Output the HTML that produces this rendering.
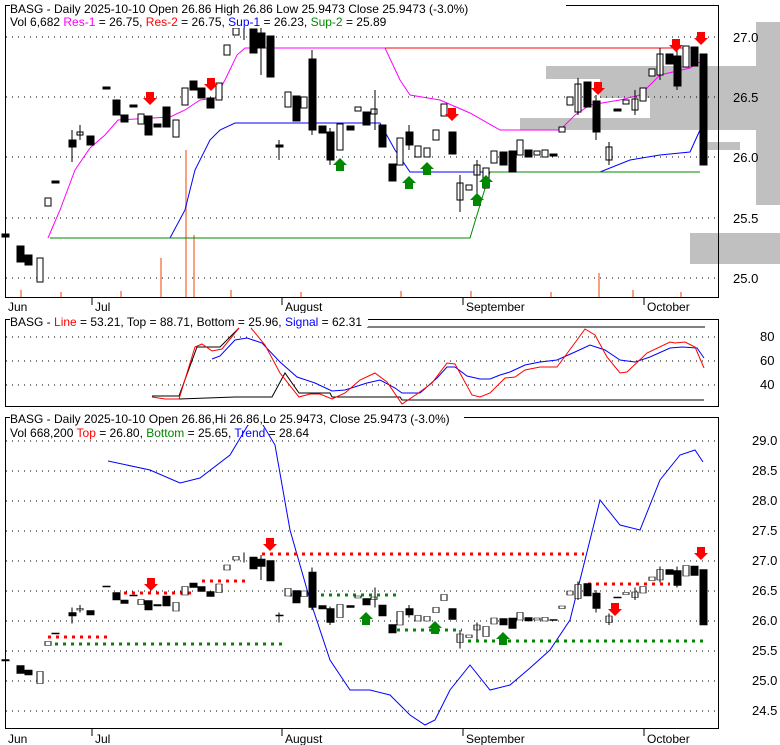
<!DOCTYPE html>
<html><head><meta charset="utf-8"><style>
html,body{margin:0;padding:0;background:#fff;}
svg{display:block;font-family:"Liberation Sans",sans-serif;font-size:12px;}
</style></head><body>
<svg width="780" height="745" viewBox="0 0 780 745" xmlns="http://www.w3.org/2000/svg">
<defs>
<g id="cd" stroke="#000" vector-effect="non-scaling-stroke">
<rect x="2" y="234" width="7" height="3" fill="#000"/>
<rect x="17" y="246" width="7" height="16" fill="#000"/>
<rect x="25" y="255" width="7" height="10" fill="#000"/>
<rect x="37" y="258" width="6" height="24" fill="#fff"/>
<rect x="45" y="198" width="6" height="8" fill="#fff"/>
<rect x="52" y="181" width="7" height="2" fill="#000"/>
<rect x="69" y="140" width="7" height="7" fill="#000"/>
<rect x="77" y="132" width="6" height="3" fill="#fff"/>
<rect x="87" y="136" width="7" height="9" fill="#000"/>
<rect x="103" y="87" width="7" height="2" fill="#000"/>
<rect x="113" y="100" width="7" height="15" fill="#000"/>
<rect x="121" y="115" width="7" height="7" fill="#000"/>
<rect x="130" y="105" width="7" height="2" fill="#000"/>
<rect x="138" y="114" width="6" height="10" fill="#fff"/>
<rect x="145" y="116" width="7" height="19" fill="#000"/>
<rect x="154" y="124" width="7" height="3" fill="#000"/>
<rect x="163" y="107" width="7" height="20" fill="#000"/>
<rect x="173" y="120" width="6" height="17" fill="#fff"/>
<rect x="182" y="88" width="6" height="17" fill="#fff"/>
<rect x="190" y="81" width="7" height="9" fill="#000"/>
<rect x="198" y="88" width="7" height="10" fill="#000"/>
<rect x="207" y="98" width="7" height="10" fill="#000"/>
<rect x="216" y="83" width="6" height="17" fill="#fff"/>
<rect x="224" y="45" width="6" height="10" fill="#fff"/>
<rect x="233" y="28" width="6" height="7" fill="#fff"/>
<rect x="250" y="29" width="7" height="24" fill="#000"/>
<rect x="258" y="33" width="7" height="15" fill="#000"/>
<rect x="267" y="36" width="7" height="41" fill="#000"/>
<rect x="276" y="145" width="7" height="2" fill="#000"/>
<rect x="285" y="92" width="6" height="15" fill="#fff"/>
<rect x="293" y="96" width="7" height="25" fill="#000"/>
<rect x="301" y="97" width="6" height="11" fill="#fff"/>
<rect x="309" y="59" width="7" height="71" fill="#000"/>
<rect x="319" y="126" width="7" height="7" fill="#000"/>
<rect x="327" y="132" width="7" height="28" fill="#000"/>
<rect x="337" y="124" width="6" height="26" fill="#fff"/>
<rect x="347" y="126" width="7" height="4" fill="#000"/>
<rect x="355" y="107" width="6" height="4" fill="#fff"/>
<rect x="363" y="112" width="7" height="13" fill="#000"/>
<rect x="371" y="109" width="6" height="5" fill="#fff"/>
<rect x="379" y="125" width="7" height="22" fill="#000"/>
<rect x="389" y="164" width="7" height="17" fill="#000"/>
<rect x="397" y="138" width="6" height="27" fill="#fff"/>
<rect x="406" y="132" width="7" height="13" fill="#000"/>
<rect x="415" y="146" width="6" height="11" fill="#fff"/>
<rect x="424" y="148" width="6" height="9" fill="#fff"/>
<rect x="433" y="130" width="6" height="10" fill="#fff"/>
<rect x="441" y="104" width="6" height="12" fill="#fff"/>
<rect x="449" y="132" width="7" height="22" fill="#000"/>
<rect x="457" y="183" width="6" height="17" fill="#fff"/>
<rect x="466" y="185" width="6" height="5" fill="#fff"/>
<rect x="474" y="165" width="6" height="10" fill="#fff"/>
<rect x="483" y="168" width="6" height="20" fill="#fff"/>
<rect x="491" y="151" width="6" height="12" fill="#fff"/>
<rect x="500" y="152" width="7" height="13" fill="#000"/>
<rect x="509" y="151" width="7" height="21" fill="#000"/>
<rect x="517" y="140" width="6" height="15" fill="#fff"/>
<rect x="525" y="150" width="7" height="7" fill="#000"/>
<rect x="534" y="151" width="6" height="4" fill="#fff"/>
<rect x="542" y="150" width="6" height="7" fill="#fff"/>
<rect x="550" y="154" width="7" height="2" fill="#000"/>
<rect x="559" y="127" width="6" height="5" fill="#fff"/>
<rect x="567" y="97" width="6" height="8" fill="#fff"/>
<rect x="575" y="84" width="6" height="28" fill="#fff"/>
<rect x="584" y="82" width="7" height="25" fill="#000"/>
<rect x="593" y="101" width="7" height="31" fill="#000"/>
<rect x="606" y="147" width="6" height="13" fill="#fff"/>
<rect x="614" y="109" width="7" height="2" fill="#000"/>
<rect x="623" y="100" width="6" height="4" fill="#fff"/>
<rect x="632" y="99" width="6" height="11" fill="#fff"/>
<rect x="640" y="88" width="6" height="13" fill="#fff"/>
<rect x="649" y="69" width="6" height="7" fill="#fff"/>
<rect x="657" y="54" width="6" height="21" fill="#fff"/>
<rect x="666" y="54" width="7" height="10" fill="#000"/>
<rect x="674" y="56" width="7" height="30" fill="#000"/>
<rect x="683" y="46" width="6" height="21" fill="#fff"/>
<rect x="691" y="47" width="7" height="19" fill="#000"/>
<rect x="700" y="54" width="7" height="111" fill="#000"/>
<path d="M72 130V162M80 125V140M244 20V40M261 25V75M279 140V160M312 50V135M330 128V165M375 90V130M409 125V150M460 175V212M477 160V195M578 78V115M596 95V140M609 142V165M635 90V115M660 48V80M677 48V90" fill="none"/>
</g>
<polygon id="ad" points="-4,0 4,0 4,6 7,6 0,13 -7,6 -4,6" fill="#f00"/>
<polygon id="au" points="-4,13 4,13 4,7 7,7 0,0 -7,7 -4,7" fill="#080"/>
</defs>

<!-- PANEL 1 -->
<g fill="#c0c0c0">
<rect x="546" y="66" width="234" height="13"/>
<rect x="600" y="79" width="180" height="19"/>
<rect x="650" y="98" width="130" height="20"/>
<rect x="520" y="118" width="260" height="12"/>
<rect x="756" y="22" width="24" height="44"/>
<rect x="756" y="130" width="24" height="75"/>
<rect x="707" y="142" width="33" height="8"/>
<rect x="690" y="233" width="90" height="31"/>
</g>
<g stroke="#000" stroke-dasharray="1,5">
<path d="M6 37H720M6 97H720M6 157H720M6 218H720M6 278H720"/>
</g>
<g fill="#f8a080">
<rect x="185" y="150" width="2" height="147"/><rect x="160" y="258" width="2" height="39"/><rect x="193" y="235" width="2" height="62"/><rect x="598" y="273" width="2" height="24"/>
<rect x="20" y="290" width="2" height="7"/><rect x="60" y="292" width="2" height="5"/><rect x="120" y="291" width="2" height="6"/><rect x="230" y="290" width="2" height="7"/><rect x="300" y="292" width="2" height="5"/><rect x="400" y="291" width="2" height="6"/><rect x="470" y="291" width="2" height="6"/><rect x="550" y="292" width="2" height="5"/><rect x="632" y="290" width="2" height="7"/><rect x="680" y="292" width="2" height="5"/>
</g>
<path d="M48 238L60 210L75 170L90 148L105 135L118 120L170 117L185 110L200 100L215 98L225 80L237 55L245 48L385 48L400 80L410 95L440 100L470 113L500 130L560 130L575 115L590 105L620 100L640 95L660 75L690 68L700 62" fill="none" stroke="#f0f"/>
<path d="M385 48H690" stroke="#f00"/>
<path d="M170 238L185 210L195 170L210 140L220 130L235 123L380 123L395 150L410 172L600 172L630 160L660 155L690 152L700 130" fill="none" stroke="#00f"/>
<path d="M50 238H470L490 172H700" fill="none" stroke="#080"/>
<use href="#cd"/>
<use href="#ad" x="150" y="92"/><use href="#ad" x="211" y="78"/><use href="#ad" x="452" y="108"/><use href="#ad" x="598" y="82"/><use href="#ad" x="676" y="39"/><use href="#ad" x="701" y="32"/>
<use href="#au" x="340" y="158"/><use href="#au" x="409" y="176"/><use href="#au" x="427" y="162"/><use href="#au" x="477" y="193"/><use href="#au" x="486" y="175"/>
<rect x="5.5" y="5.5" width="713" height="292" fill="none" stroke="#000"/>
<rect x="6" y="0" width="560" height="28" fill="#fff"/>
<path d="M5.5 12V5.5H10" stroke="#000" fill="none"/>
<text x="10" y="13">BASG - Daily 2025-10-10 Open 26.86  High 26.86  Low 25.9473  Close 25.9473 (-3.0%)</text>
<text x="10" y="26">Vol 6,682 <tspan fill="#f0f">Res-1</tspan> = 26.75, <tspan fill="#f00">Res-2</tspan> = 26.75, <tspan fill="#00f">Sup-1</tspan> = 26.23, <tspan fill="#080">Sup-2</tspan> = 25.89</text>
<g font-size="13"><text x="733" y="42">27.0</text><text x="733" y="102">26.5</text><text x="733" y="162">26.0</text><text x="733" y="223">25.5</text><text x="733" y="283">25.0</text></g>
<path d="M92 298V305M282 298V305M463 298V305M644 298V305" stroke="#000"/>
<text x="8" y="311">Jun</text><text x="95" y="311">Jul</text><text x="285" y="311">August</text><text x="466" y="311">September</text><text x="647" y="311">October</text>

<!-- PANEL 2 -->
<rect x="5.5" y="319.5" width="713" height="87" fill="none" stroke="#000"/>
<g stroke="#000" stroke-dasharray="1,5"><path d="M6 337H720M6 361H720M6 385H720"/></g>
<path d="M367 327H705" stroke="#000"/>
<path d="M152 396H179L197 347H220L239 328" fill="none" stroke="#000"/>
<path d="M179 399L235 397L272 397L285 373L299 393L330 393L332 397L400 397L402 400L704 400" fill="none" stroke="#000"/>
<path d="M212 359L220 356L235 340L247 338L262 343L280 362L297 377L315 383L332 391L345 390L367 383L380 380L395 388L402 393L420 393L437 378L447 367L455 367L467 376L480 379L490 379L500 375L510 372L525 365L540 362L557 360L575 352L590 345L605 350L620 360L635 362L650 357L670 348L682 347L697 348L704 358" fill="none" stroke="#00f"/>
<path d="M152 397L165 399L179 399L195 347L202 344L212 351L222 349L239 328M251 328L265 345L280 373L299 397L310 394L320 394L332 399L345 393L360 380L375 373L387 382L402 404L417 394L432 383L447 363L455 364L472 395L480 397L490 393L505 378L515 377L525 370L540 367L557 367L577 340L585 329L595 335L607 357L620 373L627 372L647 353L670 342L675 343L685 342L695 347L704 368" fill="none" stroke="#f00"/>
<rect x="6" y="313" width="362" height="14" fill="#fff"/>
<path d="M5.5 325V319.5H10" stroke="#000" fill="none"/>
<text x="10" y="326">BASG - <tspan fill="#f00">Line</tspan> = 53.21, Top = 88.71, Bottom = 25.96, <tspan fill="#00f">Signal</tspan> = 62.31</text>
<g font-size="13"><text x="760" y="341">80</text><text x="760" y="365">60</text><text x="760" y="389">40</text></g>

<!-- PANEL 3 -->
<g stroke="#000" stroke-dasharray="1,5"><path d="M6 441H720M6 471H720M6 501H720M6 531H720M6 561H720M6 591H720M6 621H720M6 651H720M6 681H720M6 711H720"/></g>
<path d="M108 461L150 470L180 483L200 478L230 455L248 425L260 420L275 445L290 530L310 600L330 660L350 690L370 690L390 695L410 715L425 725L435 720L450 690L470 665L490 690L510 685L530 668L550 650L570 620L585 560L600 500L620 525L640 530L660 480L680 455L695 450L703 462" fill="none" stroke="#00f"/>
<g stroke-width="3" stroke-dasharray="3,5" fill="none">
<path d="M48 637H112M124 593H195M202 581H248M262 554H584M588 584H670" stroke="#f00"/>
<path d="M55 644H282M289 595H397M397 630H462M468 641H703" stroke="#080"/>
</g>
<use href="#cd" transform="translate(0,542.5) scale(1,0.5)"/>
<use href="#ad" x="270" y="538"/><use href="#ad" x="151" y="578"/><use href="#ad" x="615" y="603"/><use href="#ad" x="701" y="547"/>
<use href="#au" x="366" y="612"/><use href="#au" x="435" y="621"/><use href="#au" x="503" y="632"/>
<rect x="5.5" y="417.5" width="713" height="311" fill="none" stroke="#000"/>
<rect x="6" y="411" width="458" height="14" fill="#fff"/>
<path d="M5.5 423V417.5H10" stroke="#000" fill="none"/>
<text x="10" y="423">BASG - Daily 2025-10-10 Open 26.86,Hi 26.86,Lo 25.9473, Close 25.9473 (-3.0%)</text>
<text x="10" y="437">Vol 668,200 <tspan fill="#f00">Top</tspan> = 26.80, <tspan fill="#080">Bottom</tspan> = 25.65, <tspan fill="#00f">Trend</tspan> = 28.64</text>
<g font-size="13"><text x="752" y="445">29.0</text><text x="752" y="475">28.5</text><text x="752" y="505">28.0</text><text x="752" y="535">27.5</text><text x="752" y="565">27.0</text><text x="752" y="595">26.5</text><text x="752" y="625">26.0</text><text x="752" y="655">25.5</text><text x="752" y="685">25.0</text><text x="752" y="715">24.5</text></g>
<path d="M92 729V736M282 729V736M463 729V736M644 729V736" stroke="#000"/>
<text x="8" y="743">Jun</text><text x="95" y="743">Jul</text><text x="285" y="743">August</text><text x="466" y="743">September</text><text x="647" y="743">October</text>
</svg>
</body></html>
